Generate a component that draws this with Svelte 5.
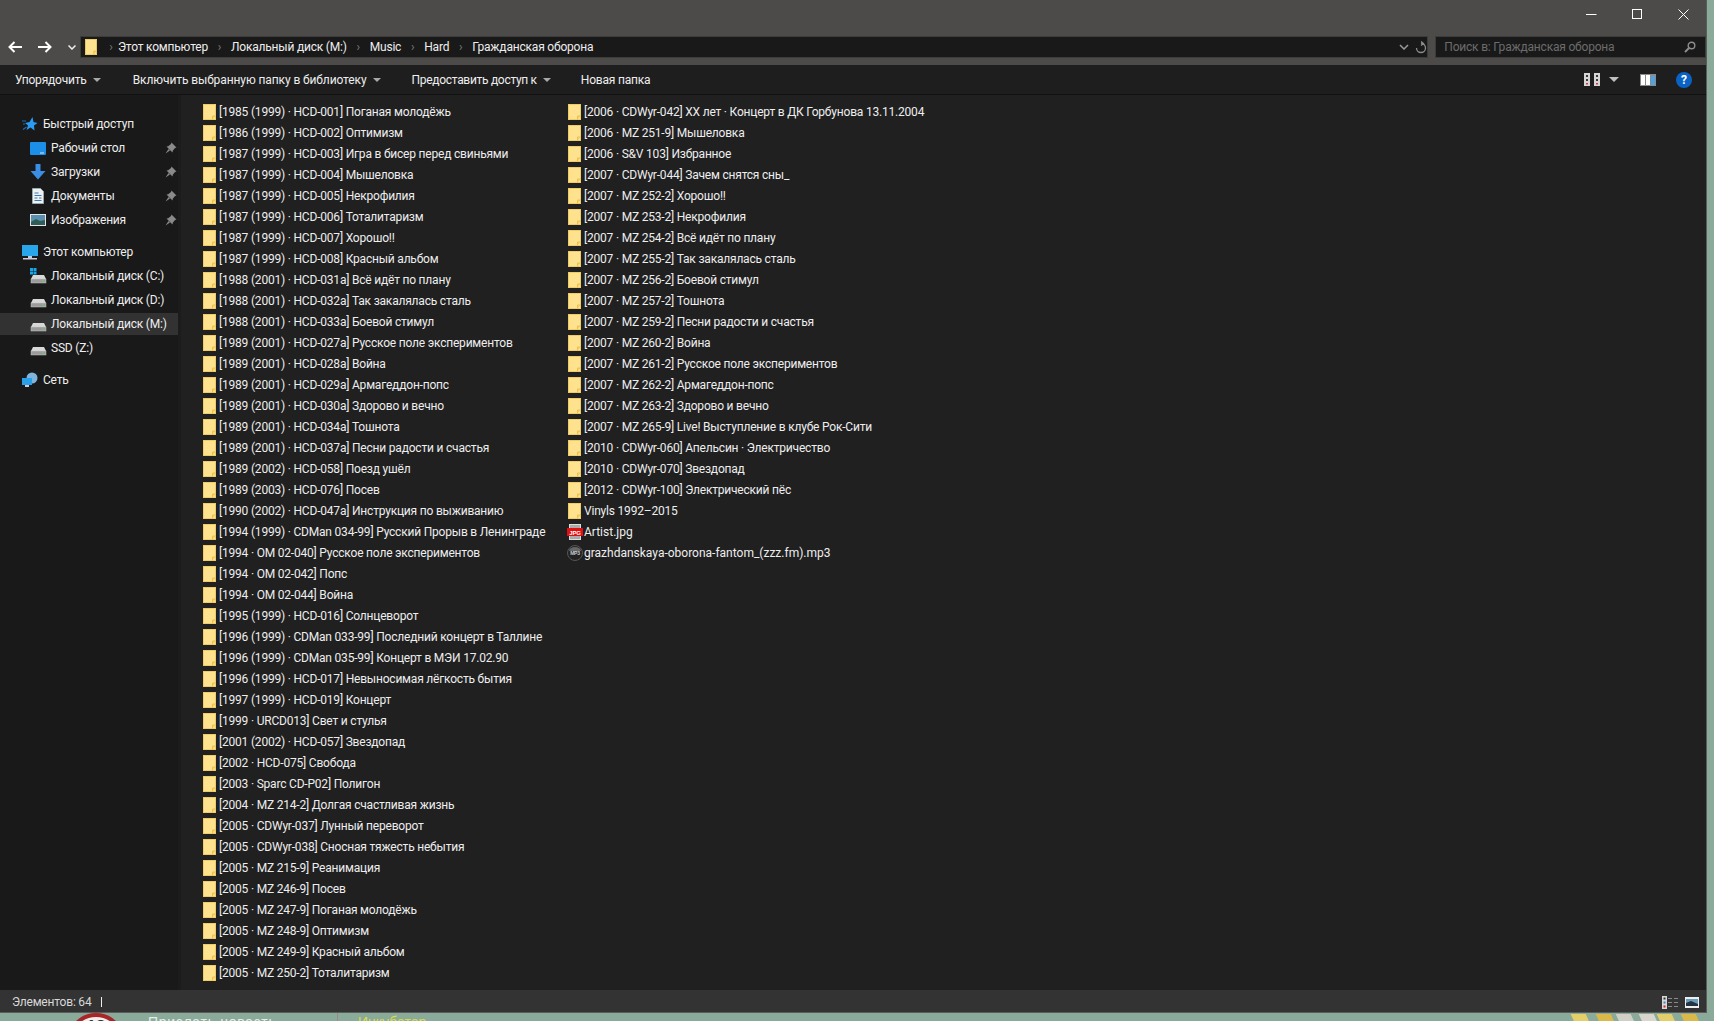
<script>
  const col1 = `[1985 (1999) · HCD-001] Поганая молодёжь
[1986 (1999) · HCD-002] Оптимизм
[1987 (1999) · HCD-003] Игра в бисер перед свиньями
[1987 (1999) · HCD-004] Мышеловка
[1987 (1999) · HCD-005] Некрофилия
[1987 (1999) · HCD-006] Тоталитаризм
[1987 (1999) · HCD-007] Хорошо!!
[1987 (1999) · HCD-008] Красный альбом
[1988 (2001) · HCD-031a] Всё идёт по плану
[1988 (2001) · HCD-032a] Так закалялась сталь
[1988 (2001) · HCD-033a] Боевой стимул
[1989 (2001) · HCD-027a] Русское поле экспериментов
[1989 (2001) · HCD-028a] Война
[1989 (2001) · HCD-029a] Армагеддон-попс
[1989 (2001) · HCD-030a] Здорово и вечно
[1989 (2001) · HCD-034a] Тошнота
[1989 (2001) · HCD-037a] Песни радости и счастья
[1989 (2002) · HCD-058] Поезд ушёл
[1989 (2003) · HCD-076] Посев
[1990 (2002) · HCD-047a] Инструкция по выживанию
[1994 (1999) · CDMan 034-99] Русский Прорыв в Ленинграде
[1994 · OM 02-040] Русское поле экспериментов
[1994 · OM 02-042] Попс
[1994 · OM 02-044] Война
[1995 (1999) · HCD-016] Солнцеворот
[1996 (1999) · CDMan 033-99] Последний концерт в Таллине
[1996 (1999) · CDMan 035-99] Концерт в МЭИ 17.02.90
[1996 (1999) · HCD-017] Невыносимая лёгкость бытия
[1997 (1999) · HCD-019] Концерт
[1999 · URCD013] Свет и стулья
[2001 (2002) · HCD-057] Звездопад
[2002 · HCD-075] Свобода
[2003 · Sparc CD-P02] Полигон
[2004 · MZ 214-2] Долгая счастливая жизнь
[2005 · CDWyr-037] Лунный переворот
[2005 · CDWyr-038] Сносная тяжесть небытия
[2005 · MZ 215-9] Реанимация
[2005 · MZ 246-9] Посев
[2005 · MZ 247-9] Поганая молодёжь
[2005 · MZ 248-9] Оптимизм
[2005 · MZ 249-9] Красный альбом
[2005 · MZ 250-2] Тоталитаризм
[2006 · CDWyr-042] XX лет · Концерт в ДК Горбунова 13.11.2004
[2006 · MZ 251-9] Мышеловка
[2006 · S&V 103] Избранное
[2007 · CDWyr-044] Зачем снятся сны_
[2007 · MZ 252-2] Хорошо!!
[2007 · MZ 253-2] Некрофилия
[2007 · MZ 254-2] Всё идёт по плану
[2007 · MZ 255-2] Так закалялась сталь
[2007 · MZ 256-2] Боевой стимул
[2007 · MZ 257-2] Тошнота
[2007 · MZ 259-2] Песни радости и счастья
[2007 · MZ 260-2] Война
[2007 · MZ 261-2] Русское поле экспериментов
[2007 · MZ 262-2] Армагеддон-попс
[2007 · MZ 263-2] Здорово и вечно
[2007 · MZ 265-9] Live! Выступление в клубе Рок-Сити
[2010 · CDWyr-060] Апельсин · Электричество
[2010 · CDWyr-070] Звездопад
[2012 · CDWyr-100] Электрический пёс
Vinyls 1992–2015`.split('\n');
  const crumbs = ['Этот компьютер', 'Локальный диск (M:)', 'Music', 'Hard', 'Гражданская оборона'];
  const tools = ['Упорядочить', 'Включить выбранную папку в библиотеку', 'Предоставить доступ к'];
  const chips = [['#e3cf6a', 0], ['#d9b94a', 10], ['#cfcfc6', 5], ['#d8d6cc', 8], ['#e3cf6a', 3], ['#d9b94a', 9]];
</script>

{#snippet folder()}
  <svg class="folder" width="13" height="16" viewBox="0 0 13 16">
    <rect x="0.5" y="0.5" width="12" height="15" fill="#ffe28e" stroke="#f1cb63"/>
    <path d="M9.5 15.5V12H12.5" fill="#f6d06a" stroke="#eac253"/>
  </svg>
{/snippet}
{#snippet pin()}
  <svg class="pin" width="12" height="12" viewBox="0 0 12 12"><path d="M6.5 0.5 11.5 5.5 10 6 7.8 8.8 7.5 10.5 1.5 4.5 3.2 4.2 6 2Z M3.5 7 0.5 11.5 5 8.5Z" fill="#8a8a8a"/></svg>
{/snippet}
{#snippet drive(win)}
  <svg class="ico drive" width="17" height="16" viewBox="0 0 17 16">
    {#if win}<path d="M0 0h3v3H0zM3.5 0h3v3h-3zM0 3.5h3v3H0zM3.5 3.5h3v3h-3z" fill="#19a6e8"/>{/if}
    <path d="M3 7h11l2 4H1Z" fill="#d8d8d8"/>
    <rect x="1" y="11" width="15" height="4" fill="#9b9b9b" stroke="#c8c8c8" stroke-width=".5"/>
    <rect x="12" y="12.5" width="2" height="1" fill="#5fd35f"/>
  </svg>
{/snippet}

<div class="desk">
  <div class="win">
    <div class="title">
      <div class="caps">
        <svg width="11" height="11" viewBox="0 0 11 11"><path d="M0 5.5h10.5" stroke="#fff"/></svg>
        <svg width="11" height="11" viewBox="0 0 11 11"><rect x=".5" y=".5" width="9" height="9" fill="none" stroke="#fff"/></svg>
        <svg width="11" height="11" viewBox="0 0 11 11"><path d="M.5.5l10 10M10.5.5l-10 10" stroke="#fff"/></svg>
      </div>
      <div class="navrow">
        <svg class="nav" width="14" height="12" viewBox="0 0 14 12"><path d="M6.5 1 1.5 6l5 5M1.5 6H14" fill="none" stroke="#fff" stroke-width="2"/></svg>
        <svg class="nav fwd" width="14" height="12" viewBox="0 0 14 12"><path d="M7.5 1l5 5-5 5M12.5 6H0" fill="none" stroke="#fff" stroke-width="2"/></svg>
        <svg class="hist" width="8" height="5" viewBox="0 0 8 5"><path d="M.5.5 4 4 7.500.5" fill="none" stroke="#eee" stroke-width="1.500"/></svg>
        <div class="addr">
          <svg class="addrfolder" width="12" height="16" viewBox="0 0 13 16" preserveAspectRatio="none"><rect x=".5" y=".5" width="12" height="15" fill="#ffe28e" stroke="#f1cb63"/><path d="M9.500 15.500V12H12.500" fill="#f6d06a" stroke="#eac253"/></svg>
          <span class="sep first">›</span>
          {#each crumbs as c, i}
            <span class="crumb">{c}</span>
            {#if i < crumbs.length - 1}<span class="sep">›</span>{/if}
          {/each}
          <svg class="addrchev" width="10" height="6" viewBox="0 0 10 6"><path d="M1 1l4 4 4-4" fill="none" stroke="#999" stroke-width="1.500"/></svg>
          <svg class="refresh" width="12" height="13" viewBox="0 0 12 13"><path d="M6 2.500a4.500 4.500 0 1 1-4.500 4.500M6 .5l2.500 2-2.500 2" fill="none" stroke="#8c8c8c" stroke-width="1.300"/></svg>
        </div>
        <div class="search">
          <span>Поиск в: Гражданская оборона</span>
          <svg width="12" height="12" viewBox="0 0 12 12"><circle cx="7.500" cy="4.500" r="3.300" fill="none" stroke="#8c8c8c" stroke-width="1.400"/><path d="M5 7 1 11" stroke="#8c8c8c" stroke-width="2"/></svg>
        </div>
      </div>
    </div>

    <div class="toolbar">
      {#each tools as t}
        <span class="tool">{t}<i class="caret"></i></span>
      {/each}
      <span class="tool">Новая папка</span>
      <div class="tright">
        <svg width="16" height="13" viewBox="0 0 16 13"><path d="M0 0h6v13H0zM10 0h6v13h-6z" fill="#d6d6d6"/><path d="M2 2h2v2H2zM2 6h2v2H2zM12 2h2v2h-2zM12 6h2v2h-2z" fill="#3a3a3a"/><path d="M2 10h2v1.500H2zM12 10h2v1.500h-2z" fill="#d04040"/></svg>
        <i class="caret big"></i>
        <svg class="pane" width="16" height="12" viewBox="0 0 16 12"><rect width="16" height="12" fill="#8b8b8b"/><rect x="1" y="1" width="4" height="10" fill="#fff"/><rect x="6" y="1" width="4" height="10" fill="#fff"/><rect x="11" y="2" width="4" height="9" fill="#4fa3e0"/></svg>
        <span class="help">?</span>
      </div>
    </div>

    <div class="main">
      <nav class="side">
        <div class="row head">
          <svg class="ico" width="16" height="16" viewBox="0 0 16 16"><path d="M10.500 1 11.500 6 15.500 7 12 9.500 12.500 14.500 8.500 11.500 4.500 14 6 9.500 3 7 7.500 6Z" fill="#2b9af0"/><path d="M4 5H0M3 8H1M4.500 11 1 13.500" stroke="#1c6fb5" stroke-width="1.200"/></svg>
          <span>Быстрый доступ</span>
        </div>
        <div class="row sub">
          <svg class="ico" width="16" height="13" viewBox="0 0 16 13"><rect width="16" height="13" rx="1" fill="#1c8fe8"/><rect x="10" y="10.500" width="4" height="1" fill="#cfe8fb"/></svg>
          <span>Рабочий стол</span>{@render pin()}
        </div>
        <div class="row sub">
          <svg class="ico" width="16" height="16" viewBox="0 0 16 16"><path d="M5.500 0h5v7H15.500L8 15.500.5 7h5Z" fill="#3a8ee6"/></svg>
          <span>Загрузки</span>{@render pin()}
        </div>
        <div class="row sub">
          <svg class="ico" width="16" height="16" viewBox="0 0 16 16"><path d="M2.500.5h8l3 3v12h-11Z" fill="#eef2f5" stroke="#9aa"/><path d="M4.500 5h4M4.500 7.500h7M4.500 10h3M9 10h2.500M4.500 12.500h7" stroke="#3f78b5"/></svg>
          <span>Документы</span>{@render pin()}
        </div>
        <div class="row sub">
          <svg class="ico" width="16" height="12" viewBox="0 0 16 12"><rect width="16" height="12" fill="#e6e6e6"/><rect x="1" y="1" width="14" height="10" fill="#5a8fb0"/><path d="M1 8 6 5l4 2 5-1v5H1Z" fill="#2f5d57"/></svg>
          <span>Изображения</span>{@render pin()}
        </div>
        <div class="row head gap">
          <svg class="ico" width="16" height="15" viewBox="0 0 16 15"><rect width="16" height="11" fill="#29a5ea"/><rect x="6" y="11" width="4" height="2" fill="#bcd"/><rect x="1" y="13" width="14" height="1.500" fill="#ccd"/></svg>
          <span>Этот компьютер</span>
        </div>
        <div class="row sub">{@render drive(true)}<span>Локальный диск (C:)</span></div>
        <div class="row sub">{@render drive(false)}<span>Локальный диск (D:)</span></div>
        <div class="row sub sel">{@render drive(false)}<span>Локальный диск (M:)</span></div>
        <div class="row sub">{@render drive(false)}<span>SSD (Z:)</span></div>
        <div class="row head gap">
          <svg class="ico" width="16" height="16" viewBox="0 0 16 16"><circle cx="10" cy="6" r="5.500" fill="#7fb4dc"/><rect y="6" width="10" height="7" fill="#2ba0e8"/><rect x="3" y="13" width="4" height="2" fill="#ccd"/></svg>
          <span>Сеть</span>
        </div>
      </nav>

      <div class="list">
        {#each col1 as name}
          <div class="item">{@render folder()}<span>{name}</span></div>
        {/each}
        <div class="item">
          <svg class="fileico" width="16" height="16" viewBox="0 0 16 16"><rect x="2.500" y=".5" width="11" height="15" fill="#aaa" stroke="#ddd"/><rect y="4" width="16" height="8" fill="#e01010"/><text x="8" y="10.500" text-anchor="middle" class="jpg">JPG</text></svg>
          <span class="latin">Artist.jpg</span>
        </div>
        <div class="item">
          <svg class="fileico" width="16" height="16" viewBox="0 0 16 16"><circle cx="8" cy="8" r="7.500" fill="#222" stroke="#555"/><path d="M2 6a6 4 0 0 1 12 0Z" fill="#666"/><text x="8" y="10" text-anchor="middle" class="mp3">MP3</text></svg>
          <span class="latin">grazhdanskaya-oborona-fantom_(zzz.fm).mp3</span>
        </div>
      </div>
    </div>

    <div class="status">
      <span>Элементов: 64</span><i class="bar"></i>
      <div class="sright">
        <svg width="16" height="13" viewBox="0 0 16 13"><rect width="5" height="13" fill="#d8d8d8"/><path d="M1.500 1.500h2v2h-2z" fill="#333"/><path d="M1.500 5.500h2v2h-2z" fill="#3a86d0"/><path d="M1.500 9.500h2v2h-2z" fill="#d02020"/><path d="M6 2.500h4M12 2.500h4M6 6.500h4M12 6.500h4M6 10.500h4M12 10.500h4" stroke="#8a8a8a"/></svg>
        <svg width="14" height="11" viewBox="0 0 14 11"><rect width="14" height="11" fill="#eee"/><rect x="1" y="2" width="12" height="7" fill="#6a9dbb"/><path d="M1 6l5-2 7 3v2H1Z" fill="#234"/></svg>
      </div>
    </div>
  </div>
  <div class="edge"></div>
</div>

<div class="strip">
  <div class="badge"><b>18</b></div>
  <span class="news">Прислать новость</span>
  <i class="vr"></i>
  <span class="inc">Инкубатор</span>
  <div class="chips">
    {#each chips as [c, m]}
      <i style="background:{c};margin-left:{m}px"></i>
    {/each}
  </div>
</div>

<style>
  :global(body) { margin: 0; background: #8aab99; overflow: hidden; }
  .desk { display: flex; height: 1013px; font: 12px/16px Roboto, sans-serif; letter-spacing: -.2px; color: #eeeeee; }
  .latin { letter-spacing: 0; }
  .edge { flex: 1; }
  .win { width: 1707px; display: flex; flex-direction: column; box-sizing: border-box; border-right: 1px solid #5c5c5c; border-bottom: 1px solid #5c5c5c; }
  .title { height: 65px; background: #4c4b49; flex: none; box-sizing: border-box; }
  .caps { height: 36px; display: flex; justify-content: flex-end; gap: 35px; padding: 9px 17px 0 0; box-sizing: border-box; }
  .navrow { height: 22px; display: flex; align-items: center; }
  .nav { margin-left: 8px; }
  .nav.fwd { margin-left: 16px; }
  .hist { margin: 0 4px 0 16px; }
  .addr { width: 1350px; height: 22px; box-sizing: border-box; background: #191919; border: 1px solid #3c3c3a; display: flex; align-items: center; padding-left: 4px; }
  .addrfolder { margin-right: 8px; }
  .sep { color: #7a7a7a; width: 23px; text-align: center; flex: none; }
  .sep.first { width: 12px; margin-right: 1px; }
  .addrchev { margin-left: auto; margin-right: -7px; }
  .refresh { margin: 0 0 0 13px; }
  .search { margin-left: 7px; width: 271px; height: 22px; box-sizing: border-box; background: #191919; border: 1px solid #3c3c3a; display: flex; align-items: center; justify-content: space-between; padding: 0 9px 0 8px; color: #6c6c6c; }
  .toolbar { height: 30px; flex: none; box-sizing: border-box; background: #1e1e1e; border-bottom: 1px solid #111; display: flex; align-items: center; padding-left: 15px; gap: 30px; }
  .tool { display: flex; align-items: center; }
  .tool:nth-child(2) { letter-spacing: -.1px; margin-left: 2px; }
  .tool:nth-child(3) { letter-spacing: -.3px; margin-left: 1px; }
  .caret { display: inline-block; width: 0; height: 0; border: 4px solid transparent; border-top: 4px solid #a8a8a8; border-bottom: 0; margin-left: 6px; }
  .caret.big { border-width: 5px 5px 0; margin: 0 0 0 9px; border-top-color: #c0c0c0; }
  .tright { margin-left: auto; display: flex; align-items: center; padding-right: 14px; }
  .pane { margin-left: 21px; }
  .help { margin-left: 20px; width: 16px; height: 16px; border-radius: 50%; background: #0a63c4; color: #fff; font: bold 12px/16px Roboto, sans-serif; text-align: center; }
  .main { flex: 1; display: flex; min-height: 0; background: #202020; }
  .side { width: 178px; flex: none; padding-top: 18px; background: #191919; border-right: 3px solid #1c1c1c; margin-right: 1px; box-sizing: content-box; }
  .row { height: 22px; margin-bottom: 2px; display: flex; align-items: center; position: relative; }
  .row.head { padding-left: 22px; }
  .row.head .ico { margin-right: 5px; }
  .row.sub { padding-left: 30px; }
  .row.sub .ico { margin-right: 5px; }
  .row.sub .ico.drive { margin-right: 4px; }
  .row.gap { margin-top: 10px; }
  .row.sel { background: #323232; }
  .pin { margin-left: auto; margin-right: 1px; }
  .list { display: grid; grid-template-rows: repeat(42, 21px); grid-auto-flow: column; grid-auto-columns: 365px; padding: 6px 0 0 21px; align-content: start; }
  .item { display: flex; align-items: center; white-space: nowrap; }
  .folder { margin: 1px 3px 0 0; flex: none; }
  .fileico { margin: 0 1px 0 -1px; flex: none; }
  .jpg, .mp3 { font: bold 6px "Liberation Sans", sans-serif; fill: #fff; }
  .mp3 { fill: #ccc; font-size: 5px; }
  .status { height: 22px; flex: none; box-sizing: border-box; padding: 2px 0 0 12px; background: #333; display: flex; align-items: center; color: #d8d8d8; }
  .bar { width: 1px; height: 10px; background: #eee; margin-left: 10px; }
  .sright { margin-left: auto; display: flex; align-items: center; gap: 7px; padding-right: 7px; }
  .strip { height: 8px; overflow: hidden; display: flex; align-items: flex-start; position: relative; font: 14px/16px "Liberation Sans", sans-serif; }
  .badge { margin-left: 67px; width: 50px; height: 50px; border: 4px solid #a8252a; border-radius: 50%; background: #f2efe8; text-align: center; color: #333; flex: none; }
  .badge b { font-size: 17px; line-height: 20px; display: block; }
  .news { margin: 0 0 0 23px; color: #e6eee8; width: 189px; letter-spacing: .7px; padding-top: 1px; }
  .vr { width: 1px; height: 8px; background: #9a8a88; }
  .inc { margin-left: 20px; color: #d8dc4a; padding-top: 1px; }
  .chips { margin-left: auto; display: flex; padding: 1px 16px 0 0; }
  .chips i { width: 15px; height: 10px; transform: skewX(25deg); }
</style>
